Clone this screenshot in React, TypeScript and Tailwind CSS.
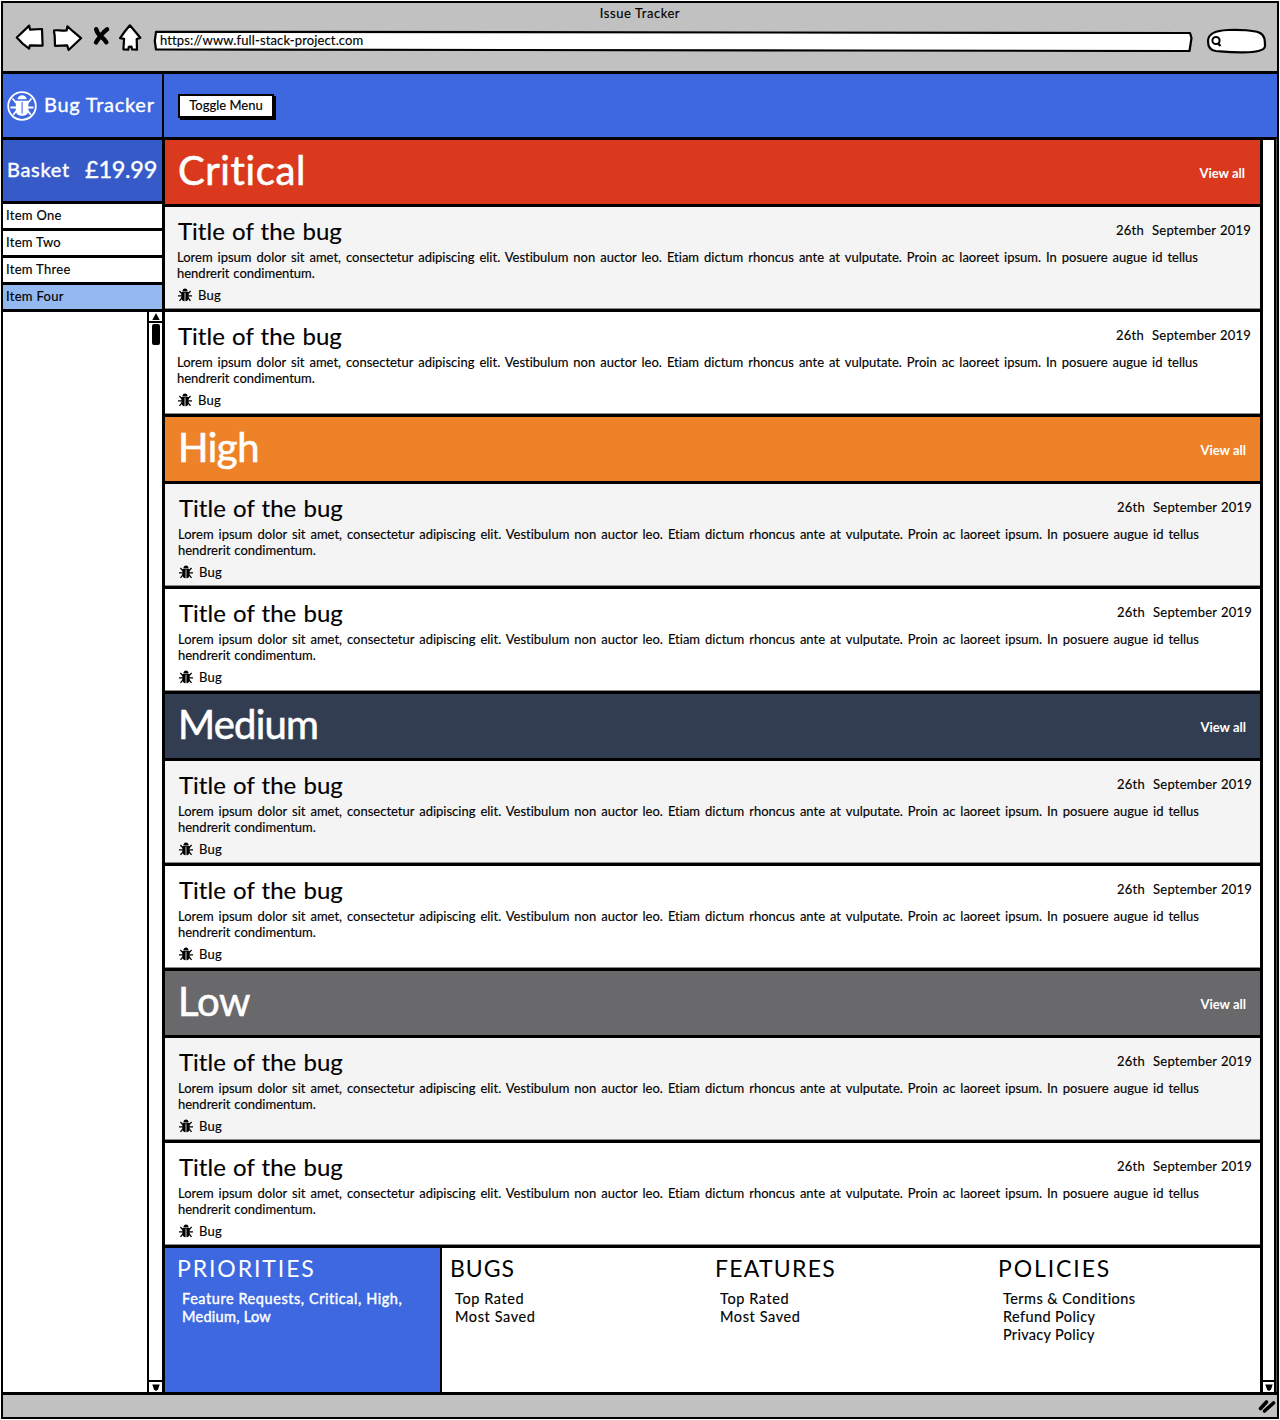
function BugGlyph() {
  return (
    <svg viewBox="0 0 14 14" className="h-[14px] w-[14px]" fill="currentColor" stroke="currentColor">
      <path d="M4.300 3.400C4.500 1.500 5.500.4 7 .4s2.500 1.100 2.700 3z" stroke="none" />
      <path d="M3.300 3.900h3.300v9.300C4.700 13.200 3.300 12 3.300 9.600zM7.400 3.900h3.300v5.700c0 2.400-1.400 3.600-3.300 3.600z" stroke="none" />
      <path d="M6.300 4.500h1.400" strokeWidth="1.200" />
      <path d="M3.800 5.600 1.400 3M0 7.800h3.600M3.900 9.800 1.500 12.900M10.200 5.600 12.600 3M14 7.800h-3.600M10.100 9.800l2.400 3.100" strokeWidth="1.300" fill="none" />
    </svg>
  );
}

function BugLogo() {
  return (
    <svg viewBox="0 0 30 30" className="h-[30px] w-[30px] text-white" fill="none" stroke="currentColor">
      <circle cx="15" cy="15" r="13.800" strokeWidth="1.800" />
      <path d="M10.500 8.300C11 5.500 12.800 4.300 15 4.300s4.300 1.200 4.800 4z" fill="currentColor" stroke="none" />
      <path d="M8.800 9.700h12.600v10.300c0 2.900-2.600 4.800-6.300 4.800s-6.300-1.900-6.300-4.800z" fill="currentColor" stroke="none" />
      <path d="M15.100 11v11.500" stroke="#3e68e0" strokeWidth="1.100" />
      <path d="M9.300 12 5.500 7.500M3.500 16.500h6M9.700 19.500l-3.400 4.300M20.800 12l3.700-4.500M26.500 16.500h-6M20.500 19.500l3.300 4.300" strokeWidth="1.800" />
    </svg>
  );
}

function NavIcons() {
  return (
    <div className="flex items-start">
      <svg viewBox="0 0 30 28" className="ml-3 mt-[21px] h-[28px] w-[30px]" fill="#fff" stroke="#000" strokeWidth="2.200" strokeLinejoin="round">
        <path d="M1.800 13.500 14.200 1.600l.8 4 12-.6.600 16.600-12.800-.2-.700 3.200-6.800-5.300z" />
      </svg>
      <svg viewBox="0 0 30 28" className="ml-2 mt-[22px] h-[28px] w-[30px]" fill="#fff" stroke="#000" strokeWidth="2.200" strokeLinejoin="round">
        <path d="M.9 5.600C3 4.600 8 5.900 13.600 5.500l.8-4.200 5.400 4.900L28 13.200 15.600 25l-1.400-4.600L2 20.800 1.700 11z" />
      </svg>
      <svg viewBox="0 0 18 20" className="ml-[9px] mt-[23px] h-[20px] w-[18px]" fill="none" stroke="#000" strokeWidth="4.400" strokeLinecap="round" strokeLinejoin="round">
        <path d="M4.200 3.200C4.500 5 6.500 8.500 9 10.500s4.500 4 5.300 5.700M15 3.400C12.500 5 10.500 7.500 8.600 10S5 14.500 4 16.400" />
      </svg>
      <svg viewBox="0 0 24 28" className="ml-[8px] mt-[21px] h-[28px] w-[24px]" fill="#fff" stroke="#000" strokeWidth="2.200" strokeLinejoin="round">
        <path d="M11.900 1.300 22.300 13.800l-3.600 1.300.3 10.600-5-.4-.5-2.600-2.700.1-.6 2.900-4.800-.4.700-10.400-4-.8 4.700-6.600z" />
      </svg>
    </div>
  );
}

function Arrow({ down }: { down?: boolean }) {
  return (
    <svg viewBox="1 0 10 9" className="h-[9px] w-[10px] shrink-0">
      {down ? <path d="M2.300 1.500h7.400L8 6.500 6 8 4 6.500z" /> : <path d="M6 1 9.700 8H2.300z" />}
    </svg>
  );
}

const severities = [
  { name: "Critical", bg: "bg-[#da391d]", tracking: "tracking-[0.6px]" },
  { name: "High", bg: "bg-[#ee8228]", tracking: "tracking-[-0.5px]" },
  { name: "Medium", bg: "bg-[#333d51]", tracking: "tracking-[-0.8px]" },
  { name: "Low", bg: "bg-[#69696b]", tracking: "tracking-[-0.2px]" },
];

const basket = ["Item One", "Item Two", "Item Three", "Item Four"];

function BugRow({ shade, nudge }: { shade: boolean; nudge: boolean }) {
  return (
    <article className={`h-[105px] border-t-[3px] border-black ${shade ? "bg-[#f4f4f4]" : "bg-white"}`}>
      <div className={`h-[102px] border-b border-[#8c8c8c] ${nudge ? "pl-[13px] pr-2" : "pl-3 pr-[9px]"}`}>
        <div className="flex h-[34px] items-start justify-between pl-px pt-2">
          <h2 className="text-[24px] leading-[32px] [word-spacing:1.1px]">Title of the bug</h2>
          <span className="whitespace-pre text-[13px] leading-[30px] tracking-[0.22px] [word-spacing:0.5px]">26th  September 2019</span>
        </div>
        <p className="mt-[8px] whitespace-nowrap text-[13px] leading-4 [word-spacing:1.65px]">
          Lorem ipsum dolor sit amet, consectetur adipiscing elit. Vestibulum non auctor leo. Etiam dictum rhoncus ante at vulputate. Proin ac laoreet ipsum. In posuere augue id tellus
          <br />
          <span className="[word-spacing:0.5px]">hendrerit condimentum.</span>
        </p>
        <div className="mt-[6px] flex items-center gap-[6px] pl-px text-[13px] leading-4 tracking-[0.3px]">
          <BugGlyph />
          <span>Bug</span>
        </div>
      </div>
    </article>
  );
}

type Link = { text: string; tracking: string };

function FooterColumn({ title, tracking, links, className }: { title: string; tracking: string; links: Link[]; className: string }) {
  return (
    <div className={`pt-1.5 ${className}`}>
      <h3 className={`text-[23px] leading-[28px] [-webkit-text-stroke-width:0px] ${tracking}`}>{title}</h3>
      <ul className="ml-[5px] mt-2 text-[14.5px] leading-[18px]">
        {links.map((l) => (
          <li key={l.text} className={`whitespace-nowrap ${l.tracking}`}>{l.text}</li>
        ))}
      </ul>
    </div>
  );
}

const ratedLinks: Link[] = [
  { text: "Top Rated", tracking: "tracking-[0.6px]" },
  { text: "Most Saved", tracking: "tracking-[0.6px]" },
];

export default function App() {
  return (
    <div className="flex h-[1420px] w-[1280px] flex-col bg-white font-['Lato','Liberation_Sans',sans-serif] text-black [font-variant-ligatures:none] [-webkit-text-stroke:0.15px_currentColor]">
      <div className="ml-px mt-px flex h-[1418px] w-[1278px] flex-col border-2 border-black">
        <div className="flex h-[68px] flex-col bg-[#c1c1c1]">
          <div className="h-0 text-center text-[13px] leading-[20px] tracking-[0.55px]">Issue Tracker</div>
          <div className="flex items-start">
            <NavIcons />
            <div className="relative ml-[11px] mt-[27px] flex h-[22px] w-[1040px] items-center">
              <svg viewBox="0 0 1040 22" className="absolute inset-0 h-[22px] w-[1040px]" fill="#fff" stroke="#000" strokeWidth="2.200" strokeLinejoin="round">
                <path d="M3 1.800 1037 3 1038.500 8 1036.500 21 700 20.500 3 19.500 1.800 11z" />
              </svg>
              <span className="relative ml-[7px] text-[13px] tracking-[0.13px]">https://www.full-stack-project.com</span>
            </div>
            <svg viewBox="0 0 62 26" className="ml-[13px] mt-[25px] h-[26px] w-[62px]" fill="#fff" stroke="#000" strokeWidth="2.200">
              <path d="M2 13C2 5 10 2.500 22 2c12-.7 26 .5 31 2.500 6 2.500 6 8 6 14-1 4-10 6-24 5.800-12-.2-20-1-25-1.300C4 22.500 2 18 2 13z" />
              <circle cx="10" cy="12.500" r="3.600" strokeWidth="2" />
              <path d="M11.500 15l3 3" strokeWidth="2.400" />
            </svg>
          </div>
        </div>
        <div className="flex h-[66px] border-t-[3px] border-black bg-[#3e68e0] text-white">
          <div className="flex w-[161px] items-center gap-[7px] border-r-2 border-black pl-1">
            <BugLogo />
            <span className="whitespace-nowrap pb-[3px] text-[20px] tracking-[0.75px] [-webkit-text-stroke-width:0.35px]">Bug Tracker</span>
          </div>
          <div className="flex items-center pl-[14px]">
            <button className="flex h-[24px] w-[96px] items-center justify-center border-2 border-black bg-white text-[13px] text-black shadow-[2px_2px_0_#000]">
              Toggle Menu
            </button>
          </div>
        </div>
        <div className="flex h-[1255px]">
          <aside className="flex w-[162px] shrink-0 flex-col border-r-[3px] border-black">
            <div className="flex h-[64px] items-center justify-between border-t-[3px] border-black bg-[#365bc8] pb-[2px] pl-1 pr-[5px] text-white [-webkit-text-stroke-width:0.4px]">
              <span className="pb-px text-[20px] tracking-[0.7px]">Basket</span>
              <span className="text-[23.5px] tracking-[-0.3px]">£19.99</span>
            </div>
            {basket.map((t) => (
              <div key={t} className={`h-[27px] border-t-[3px] border-black pl-[3px] text-[13px] leading-[23px] tracking-[0.3px] ${t === "Item Four" ? "bg-[#94b9f0]" : "bg-white"}`}>
                {t}
              </div>
            ))}
            <div className="flex flex-1 justify-end border-t-[3px] border-black">
              <div className="flex w-[15px] flex-col items-center border-l-2 border-black">
                <div className="flex h-[11px] w-full items-center justify-center border-b-2 border-black"><Arrow /></div>
                <div className="mt-px h-[21px] w-2 rounded-[2px] bg-black" />
                <div className="mt-auto flex h-[12px] w-full items-center justify-center border-t-2 border-black"><Arrow down /></div>
              </div>
            </div>
          </aside>
          <main className="w-[1098px] shrink-0 border-r-[3px] border-black">
            {severities.map((s, i) => (
              <section key={s.name}>
                <div className={`flex h-[67px] items-center justify-between border-t-[3px] border-black pl-[13px] text-white ${i > 0 ? "pr-[14px]" : "pr-[15px]"} ${s.bg}`}>
                  <h1 className={`pb-1 text-[40px] leading-none [-webkit-text-stroke-width:0.6px] ${s.tracking}`}>{s.name}</h1>
                  <span className="pt-[3px] text-[13px] font-bold [-webkit-text-stroke-width:0px]">View all</span>
                </div>
                <BugRow shade nudge={i > 0} />
                <BugRow shade={false} nudge={i > 0} />
              </section>
            ))}
            <footer className="flex h-[147px] border-t-[3px] border-black">
              <FooterColumn
                className="w-[277px] border-r-2 border-black bg-[#3e68e0] pl-3 text-white [-webkit-text-stroke-width:0.4px]"
                title="PRIORITIES"
                tracking="tracking-[1.9px]"
                links={[
                  { text: "Feature Requests, Critical, High,", tracking: "tracking-[0.56px]" },
                  { text: "Medium, Low", tracking: "tracking-[0.28px]" },
                ]}
              />
              <FooterColumn className="w-[265px] pl-2" title="BUGS" tracking="tracking-[1px]" links={ratedLinks} />
              <FooterColumn className="w-[283px] pl-2" title="FEATURES" tracking="tracking-[1.25px]" links={ratedLinks} />
              <FooterColumn
                className="pl-2"
                title="POLICIES"
                tracking="tracking-[1.9px]"
                links={[
                  { text: "Terms & Conditions", tracking: "tracking-[0.45px]" },
                  { text: "Refund Policy", tracking: "tracking-[0.4px]" },
                  { text: "Privacy Policy", tracking: "tracking-[0.3px]" },
                ]}
              />
            </footer>
          </main>
          <div className="flex flex-1 border-r border-t-[3px] border-r-[#555] border-t-black">
            <div className="flex flex-1 flex-col border-r-2 border-black">
              <div className="mt-auto flex h-[12px] w-full items-center justify-center border-t-2 border-black"><Arrow down /></div>
            </div>
          </div>
        </div>
        <div className="flex flex-1 items-center justify-end border-t-[3px] border-black bg-[#c1c1c1] pr-px">
          <svg viewBox="0 0 18 14" className="h-[14px] w-[18px]" stroke="#000" strokeWidth="3.600" strokeLinecap="round">
            <path d="M2.500 9.500 8.500 3M6.500 12l9-8" />
          </svg>
        </div>
      </div>
    </div>
  );
}
